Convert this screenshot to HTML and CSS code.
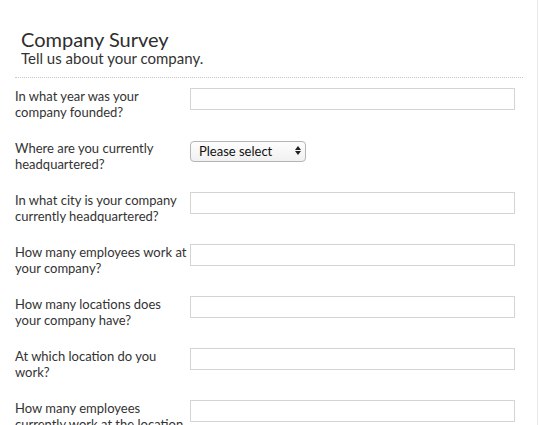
FILE: index.html
```html
<!DOCTYPE html>
<html>
<head>
<meta charset="UTF-8">
<title>Company Survey</title>
<link rel="stylesheet" href="styles.css">
</head>
<body>
<div class="page">
    <div class="survey-head">
        <h1 class="survey-title">Company Survey</h1>
        <div class="survey-sub">Tell us about your company.</div>
    </div>
    <form class="survey-form">
        <div class="q-row">
            <label class="q-label" for="q_year">In what year was your company founded?</label>
            <input class="q-input" id="q_year" type="text">
        </div>
        <div class="q-row">
            <label class="q-label" for="q_hq">Where are you currently headquartered?</label>
            <span class="select-wrap">
                <select class="q-select" id="q_hq">
                    <option>Please select</option>
                    <option>United States</option>
                    <option>Canada</option>
                    <option>Other</option>
                </select>
            </span>
        </div>
        <div class="q-row">
            <label class="q-label" for="q_city">In what city is your company currently headquartered?</label>
            <input class="q-input" id="q_city" type="text">
        </div>
        <div class="q-row">
            <label class="q-label" for="q_emp">How many employees work at your company?</label>
            <input class="q-input" id="q_emp" type="text">
        </div>
        <div class="q-row">
            <label class="q-label" for="q_loc">How many locations does your company have?</label>
            <input class="q-input" id="q_loc" type="text">
        </div>
        <div class="q-row">
            <label class="q-label" for="q_where">At which location do you work?</label>
            <input class="q-input" id="q_where" type="text">
        </div>
        <div class="q-row">
            <label class="q-label" for="q_locemp">How many employees currently work at the location you work at?</label>
            <input class="q-input" id="q_locemp" type="text">
        </div>
    </form>
</div>
</body>
</html>
```

FILE: styles.css
```css
html, body {
    margin: 0;
    padding: 0;
    background: #fff;
}
body {
    font-family: Lato, "Open Sans", sans-serif;
    color: #333;
}
.page {
    width: 538px;
    min-height: 100vh;
    box-sizing: border-box;
    border-right: 1px solid #e9e9e9;
    padding: 28px 0 0 15px;
}
.survey-head {
    width: 508px;
    padding: 0 0 11px 6px;
    border-bottom: 1px dotted #c8c8c8;
    box-sizing: border-box;
}
.survey-title {
    margin: 0;
    font-size: 20px;
    line-height: 22px;
    font-weight: normal;
    color: #2e2e2e;
}
.survey-sub {
    font-size: 15px;
    line-height: 16px;
    color: #333;
}
.survey-form {
    margin: 10px 0 0 0;
}
.q-row {
    display: flex;
    align-items: flex-start;
    margin-bottom: 20px;
}
.q-label {
    width: 174px;
    margin-right: 1px;
    flex: none;
    font-size: 13px;
    line-height: 16px;
    color: #333;
}
.q-input {
    width: 325px;
    height: 22px;
    box-sizing: border-box;
    margin: 0;
    padding: 0 4px;
    border: 1px solid #d4d4d4;
    border-radius: 0;
    font-family: Lato, sans-serif;
    font-size: 13px;
}
.select-wrap {
    position: relative;
    display: inline-block;
}
.q-select {
    appearance: none;
    -webkit-appearance: none;
    width: 116px;
    height: 21px;
    box-sizing: border-box;
    margin: 0;
    padding: 0 0 0 8px;
    border: 1px solid #b4b4b4;
    border-radius: 4px;
    background: linear-gradient(#fdfdfd, #f1f1f1);
    font-family: Lato, sans-serif;
    font-size: 13px;
    color: #111;
}
.select-wrap::before,
.select-wrap::after {
    content: "";
    position: absolute;
    right: 5px;
    border-left: 3px solid transparent;
    border-right: 3px solid transparent;
    pointer-events: none;
}
.select-wrap::before {
    top: 6px;
    border-bottom: 4px solid #222;
}
.select-wrap::after {
    top: 11px;
    border-top: 4px solid #222;
}
```
